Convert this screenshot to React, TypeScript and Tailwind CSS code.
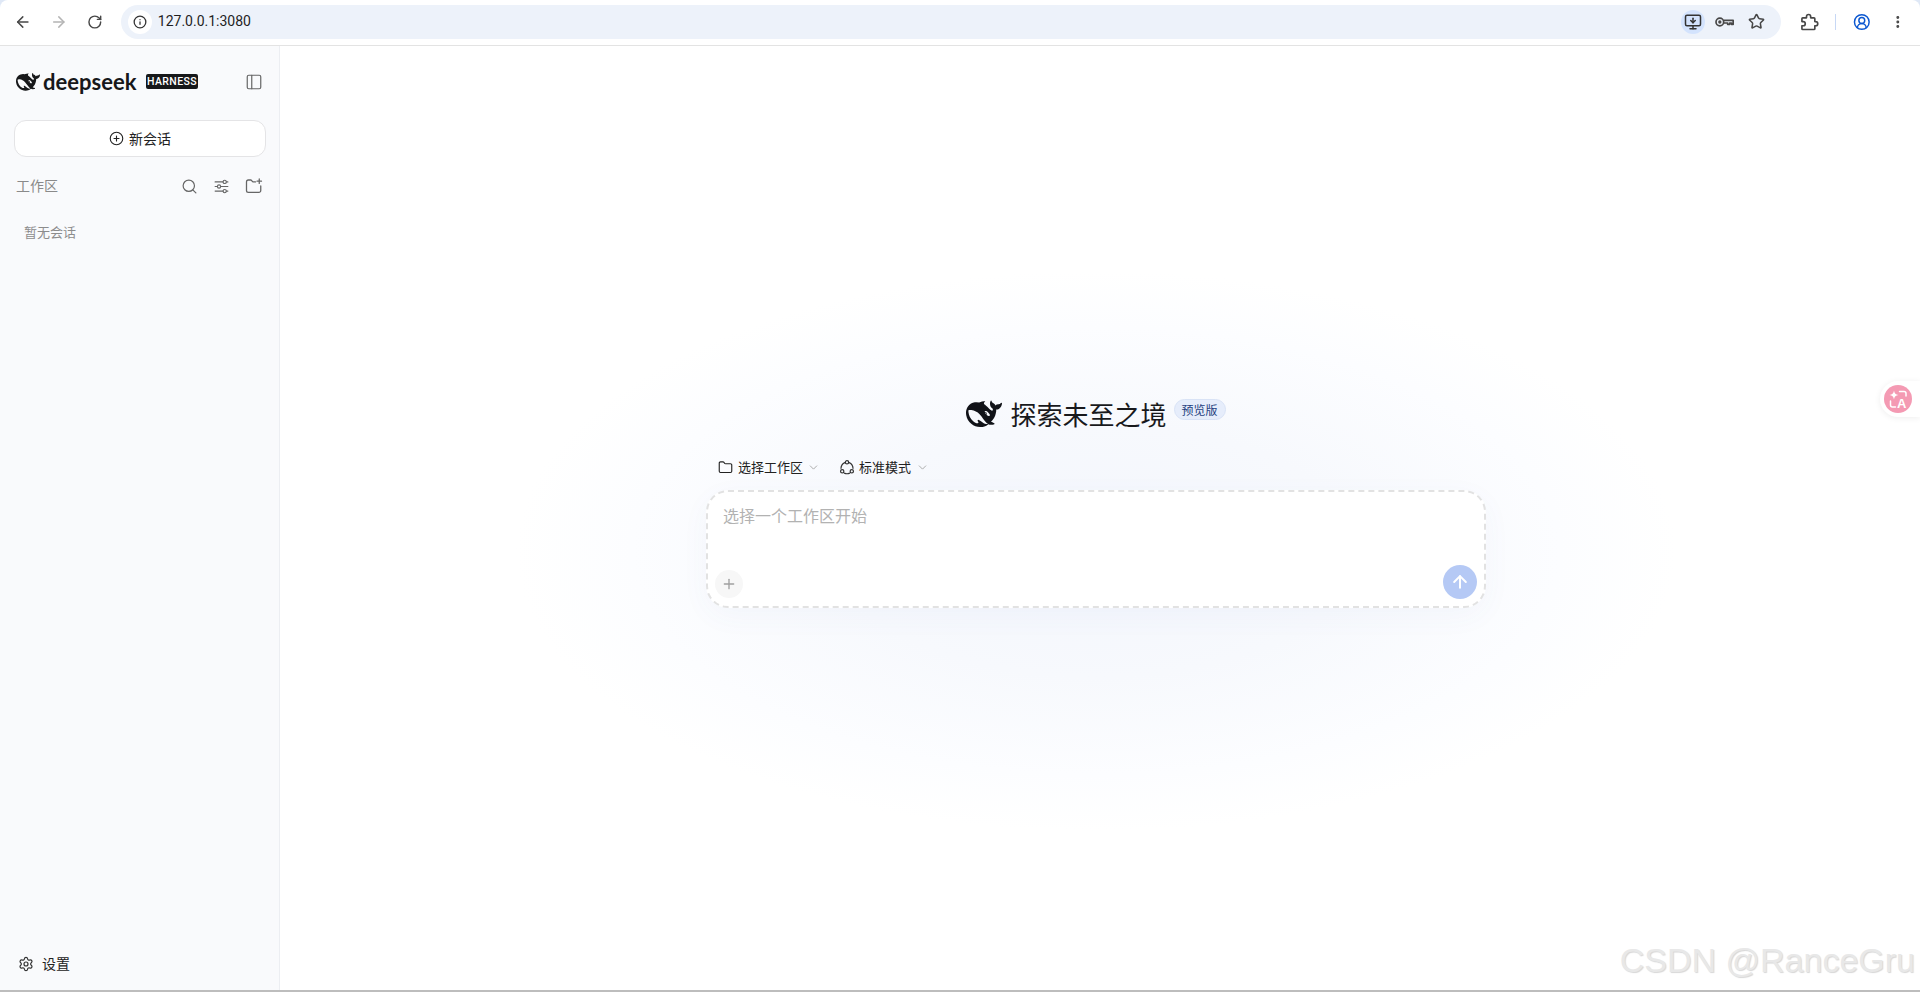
import {
  ArrowLeft,
  ArrowRight,
  ArrowUp,
  ChevronDown,
  CirclePlus,
  CircleUserRound,
  EllipsisVertical,
  Folder,
  Info,
  MonitorDown,
  PanelLeft,
  Plus,
  RotateCw,
  Search,
  Settings,
  Star,
} from "lucide-react";

const cjk = "font-['Noto_Sans_CJK_SC','Liberation_Sans',sans-serif]";

const WHALE =
  "M23.748 4.482c-.254-.124-.364.113-.512.234-.051.039-.094.09-.137.136-.372.397-.806.657-1.373.626-.829-.046-1.537.214-2.163.848-.133-.782-.575-1.248-1.247-1.548-.352-.156-.708-.311-.955-.65-.172-.241-.219-.51-.305-.774-.055-.16-.11-.323-.293-.35-.2-.031-.278.136-.356.276-.313.572-.434 1.202-.422 1.84.027 1.436.633 2.58 1.838 3.393.137.093.172.187.129.323-.082.28-.18.552-.266.833-.055.179-.137.217-.329.14a5.526 5.526 0 01-1.736-1.18c-.857-.828-1.631-1.742-2.597-2.458a11.365 11.365 0 00-.689-.471c-.985-.957.13-1.743.388-1.836.27-.098.093-.432-.779-.428-.872.004-1.67.295-2.687.684a3.055 3.055 0 01-.465.137 9.597 9.597 0 00-2.883-.102c-1.885.21-3.39 1.102-4.497 2.623C.082 8.606-.231 10.684.152 12.85c.403 2.284 1.569 4.175 3.36 5.653 1.858 1.533 3.997 2.284 6.438 2.14 1.482-.085 3.133-.284 4.994-1.86.47.234.962.327 1.78.397.63.059 1.236-.03 1.705-.128.735-.156.684-.837.419-.961-2.155-1.004-1.682-.595-2.113-.926 1.096-1.296 2.746-2.642 3.392-7.003.05-.347.007-.565 0-.845-.004-.17.035-.237.23-.256a4.173 4.173 0 001.545-.475c1.396-.763 1.96-2.015 2.093-3.517.02-.23-.004-.467-.247-.588zM11.581 18c-2.089-1.642-3.102-2.183-3.52-2.16-.392.024-.321.471-.235.763.09.288.207.486.371.739.114.167.192.416-.113.603-.673.416-1.842-.14-1.897-.167-1.361-.802-2.5-1.86-3.301-3.307-.774-1.393-1.224-2.887-1.298-4.482-.02-.386.093-.522.477-.592a4.696 4.696 0 011.529-.039c2.132.312 3.946 1.265 5.468 2.774.868.86 1.525 1.887 2.202 2.891.72 1.066 1.494 2.082 2.48 2.914.348.292.625.514.891.677-.802.09-2.14.11-3.054-.614zm1-6.44a.306.306 0 01.415-.287.302.302 0 01.2.288.306.306 0 01-.31.307.303.303 0 01-.304-.308zm3.11 1.596c-.2.081-.399.151-.59.16a1.245 1.245 0 01-.798-.254c-.274-.23-.47-.358-.552-.758a1.73 1.73 0 01.016-.588c.07-.327-.008-.537-.239-.727-.187-.156-.426-.199-.688-.199a.559.559 0 01-.254-.078c-.11-.054-.2-.19-.114-.358.028-.054.16-.186.192-.21.356-.202.767-.136 1.146.016.352.144.618.408 1.001.782.391.451.462.576.685.914.176.265.336.537.445.848.067.195-.019.354-.25.452z";

function Whale({ className }: { className: string }) {
  return (
    <svg viewBox="0 0 24 24" className={className} fill="currentColor" fillRule="evenodd">
      <path d={WHALE} />
    </svg>
  );
}

function KeyIcon() {
  return (
    <svg viewBox="0 0 24 24" className="w-[20px] h-[20px] text-[#474747]" fill="none" stroke="currentColor" strokeWidth="2">
      <circle cx="7" cy="12" r="4.6" />
      <circle cx="7" cy="12" r="1" fill="currentColor" />
      <path d="M11.4 10H23v5h-2v-1.8h-2.2V15h-2.4v-1.8h-5" strokeLinejoin="round" />
    </svg>
  );
}

function PuzzleIcon() {
  return (
    <svg viewBox="0 0 24 24" className="w-[20px] h-[20px] text-[#474747]" fill="none" stroke="currentColor" strokeWidth="2" strokeLinejoin="round">
      <path d="M4.500 7H9V5.500a2.500 2.500 0 0 1 5 0V7h4a1 1 0 0 1 1 1v3.500h1a2.500 2.500 0 0 1 0 5h-1V20a1 1 0 0 1-1 1H4.500a1 1 0 0 1-1-1v-3.500h1.500a2.500 2.500 0 0 0 0-5H3.500V8a1 1 0 0 1 1-1z" />
    </svg>
  );
}

function SlidersIcon() {
  return (
    <svg viewBox="0 0 24 24" className="w-[17px] h-[17px] text-[#666]" fill="none" stroke="currentColor" strokeWidth="1.6" strokeLinecap="round">
      <path d="M3 5.500h11M19 5.500h2M3 12h3M11 12h10M3 18.500h11M19 18.500h2" />
      <circle cx="16.500" cy="5.500" r="2.300" />
      <circle cx="8.500" cy="12" r="2.300" />
      <circle cx="16.500" cy="18.500" r="2.300" />
    </svg>
  );
}

function FolderAddIcon() {
  return (
    <svg viewBox="0 0 24 24" className="w-[18px] h-[18px] text-[#666]" fill="none" stroke="currentColor" strokeWidth="1.7" strokeLinecap="round" strokeLinejoin="round">
      <path d="M21 12v6a2.500 2.500 0 0 1-2.500 2.500h-14A2.500 2.500 0 0 1 2 18V6.500A2.500 2.500 0 0 1 4.500 4H8l2.500 2.500H14" />
      <path d="M19 2.500v6M16 5.500h6" />
    </svg>
  );
}

function ModeIcon() {
  return (
    <svg viewBox="0 0 24 24" className="w-[16px] h-[16px] text-[#333]" fill="none" stroke="currentColor" strokeWidth="1.8" strokeLinecap="round">
      <circle cx="12" cy="5" r="2.500" />
      <circle cx="4.800" cy="18.500" r="2.500" />
      <circle cx="19.200" cy="18.500" r="2.500" />
      <path d="M8.800 5.500A9.500 9.500 0 0 0 3 14M15.200 5.500A9.500 9.500 0 0 1 21 14M8 21.200a9.500 9.500 0 0 0 8 0" />
    </svg>
  );
}

function TranslateWidget() {
  return (
    <div className="absolute right-0 top-[381px] w-[40px] h-[36px] flex items-center pl-[4px] bg-white rounded-l-full shadow-[0_1px_6px_rgba(0,0,0,0.07)]">
      <div className="relative w-[28px] h-[28px] rounded-full bg-[#f49ab3] text-white">
        <svg viewBox="0 0 28 28" className="w-[28px] h-[28px]" fill="none" stroke="currentColor" strokeWidth="1.500" strokeLinecap="round">
          <path d="M10 5.500c.6 3 1.500 3.900 4.500 4.500-3 .6-3.900 1.500-4.500 4.500-.6-3-1.500-3.900-4.500-4.500 3-.6 3.900-1.500 4.500-4.500z" fill="currentColor" stroke="none" />
          <path d="M15.500 6.500h4.500a2 2 0 0 1 2 2v2.500" />
          <path d="M6.500 16v4a2 2 0 0 0 2 2h3" />
        </svg>
        <span className="absolute left-[13px] top-[12px] text-[13px] leading-[14px] font-bold font-['Liberation_Sans',sans-serif]">A</span>
      </div>
    </div>
  );
}

function BrowserBar() {
  return (
    <div className="h-[46px] shrink-0 flex items-center bg-white rounded-t-[8px] border-b border-[#e3e3e3] pl-[14px] pr-[14px] pb-[2px]">
      <ArrowLeft className="w-[18px] h-[18px] text-[#474747]" strokeWidth={2} />
      <ArrowRight className="w-[18px] h-[18px] text-[#b4b4b4] ml-[18px]" strokeWidth={2} />
      <RotateCw className="w-[16px] h-[16px] text-[#474747] ml-[20px]" strokeWidth={2.2} />
      <div className="ml-[18px] h-[34px] w-[1660px] shrink-0 rounded-full bg-[#edf2fa] flex items-center pl-[7px] pr-[16px]">
        <div className="w-[24px] h-[24px] rounded-full bg-white flex items-center justify-center">
          <Info className="w-[14px] h-[14px] text-[#333]" strokeWidth={2.2} />
        </div>
        <span className="ml-[6px] text-[14px] text-[#1f1f1f] font-['Roboto','Liberation_Sans',sans-serif]">127.0.0.1:3080</span>
        <div className="ml-auto flex items-center">
          <div className="w-[24px] h-[24px] rounded-full bg-[#d3e3fd] flex items-center justify-center">
            <MonitorDown className="w-[18px] h-[18px] text-[#333]" strokeWidth={2} />
          </div>
          <div className="ml-[9px]">
            <KeyIcon />
          </div>
          <Star className="w-[17px] h-[17px] text-[#474747] ml-[14px]" strokeWidth={2.2} />
        </div>
      </div>
      <div className="ml-[18px]">
        <PuzzleIcon />
      </div>
      <div className="w-[1px] h-[16px] bg-[#c7d8f5] ml-[16px]" />
      <CircleUserRound className="w-[18px] h-[18px] text-[#0b57d0] ml-[17px]" strokeWidth={2} />
      <EllipsisVertical className="w-[16px] h-[16px] text-[#474747] ml-[20px]" strokeWidth={2.5} />
    </div>
  );
}

function Sidebar() {
  return (
    <aside className={`w-[280px] shrink-0 bg-[#f9fafc] border-r border-[#eceef2] flex flex-col ${cjk}`}>
      <div className="h-[29px] mt-[21px] flex items-center pl-[16px] pr-[16px]">
        <Whale className="w-[24px] h-[24px] text-[#17181a]" />
        <span className="ml-[3px] w-[97px] text-[22px] leading-none font-bold text-[#17181a] font-['Lato',sans-serif]">deepseek</span>
        <span className="ml-[6px] h-[15px] w-[52px] rounded-[2px] bg-[#17181a] text-white text-[10.5px] leading-[15px] text-center font-medium tracking-[0.4px] font-['Roboto',sans-serif]">HARNESS</span>
        <PanelLeft className="ml-auto w-[18px] h-[18px] text-[#666]" strokeWidth={1.6} />
      </div>
      <button className="ml-[14px] mr-[13px] mt-[24px] h-[37px] rounded-[12px] bg-white border border-[#e4e4e6] flex items-center justify-center gap-[5px] text-[14px] text-[#222]">
        <CirclePlus className="w-[15px] h-[15px] text-[#222]" strokeWidth={1.8} />
        新会话
      </button>
      <div className="mt-[19px] h-[18px] flex items-center pl-[16px] pr-[16px]">
        <span className="text-[14px] text-[#8a8a8a]">工作区</span>
        <div className="ml-auto mt-[2px] flex items-center gap-[15px]">
          <Search className="w-[17px] h-[17px] text-[#666]" strokeWidth={1.7} />
          <SlidersIcon />
          <FolderAddIcon />
        </div>
      </div>
      <div className="mt-[29px] pl-[24px] text-[13px] leading-[18px] text-[#8c8c8c]">暂无会话</div>
      <div className="mt-auto mb-[16px] pl-[18px] flex items-center gap-[8px] text-[14px] text-[#222]">
        <Settings className="w-[16px] h-[16px] text-[#333]" strokeWidth={1.8} />
        设置
      </div>
    </aside>
  );
}

function Hero() {
  return (
    <main className={`relative flex-1 bg-white bg-[radial-gradient(ellipse_580px_280px_at_816px_505px,#f3f6fd_0%,#f7f9fd_45%,#fcfdff_80%,#ffffff_100%)] flex flex-col items-center pt-[351px] pr-[8px] ${cjk}`}>
      <div className="h-[34px] flex items-center">
        <Whale className="w-[36px] h-[36px] text-[#111318]" />
        <span className="ml-[8px] text-[26px] leading-[34px] text-[#18191c]">探索未至之境</span>
        <span className="ml-[7px] -mt-[9px] h-[21px] w-[52px] rounded-full bg-[#e6edfb] border border-[#d9e3f6] text-[12px] leading-[19px] text-center text-[#1f3f80]">预览版</span>
      </div>
      <div className="w-[780px] mt-[27px]">
        <div className="h-[18px] flex items-center pl-[12px] text-[13px] text-[#222]">
          <Folder className="w-[15px] h-[15px] text-[#222]" strokeWidth={1.8} />
          <span className="ml-[5px]">选择工作区</span>
          <ChevronDown className="w-[13px] h-[13px] text-[#aaa] ml-[4px]" strokeWidth={1.8} />
          <div className="ml-[19px]">
            <ModeIcon />
          </div>
          <span className="ml-[4px]">标准模式</span>
          <ChevronDown className="w-[13px] h-[13px] text-[#aaa] ml-[5px]" strokeWidth={1.8} />
        </div>
        <div className="mt-[14px] h-[118px] rounded-[22px] bg-white border-2 border-dashed border-[#e2e2e2] shadow-[0_8px_30px_rgba(70,90,170,0.04)] flex flex-col pl-[7px] pr-[7px] pb-[7px]">
          <div className="pl-[8px] pt-[11px] text-[16px] leading-[24px] text-[#b2b2b2]">选择一个工作区开始</div>
          <div className="mt-auto flex items-end justify-between">
            <div className="w-[28px] h-[28px] mb-[1px] rounded-full bg-[#f7f7f7] flex items-center justify-center">
              <Plus className="w-[16px] h-[16px] text-[#a0a0a0]" strokeWidth={2} />
            </div>
            <div className="w-[34px] h-[34px] rounded-full bg-[#b5c9f5] flex items-center justify-center">
              <ArrowUp className="w-[20px] h-[20px] text-white" strokeWidth={2.4} />
            </div>
          </div>
        </div>
      </div>
    </main>
  );
}

export default function App() {
  return (
    <div className="relative h-[992px] w-[1920px] overflow-hidden flex flex-col bg-[#dfe8f6]">
      <BrowserBar />
      <div className="flex-1 flex min-h-0">
        <Sidebar />
        <Hero />
      </div>
      <div className="h-[2px] shrink-0 bg-[#bdbdbd]" />
      <TranslateWidget />
      <div className="absolute right-[5px] bottom-[12px] text-[34px] leading-[40px] text-[#e8e8e8] [text-shadow:1px_1px_1px_rgba(0,0,0,0.16)] font-['Liberation_Sans',sans-serif]">
        CSDN @RanceGru
      </div>
    </div>
  );
}
